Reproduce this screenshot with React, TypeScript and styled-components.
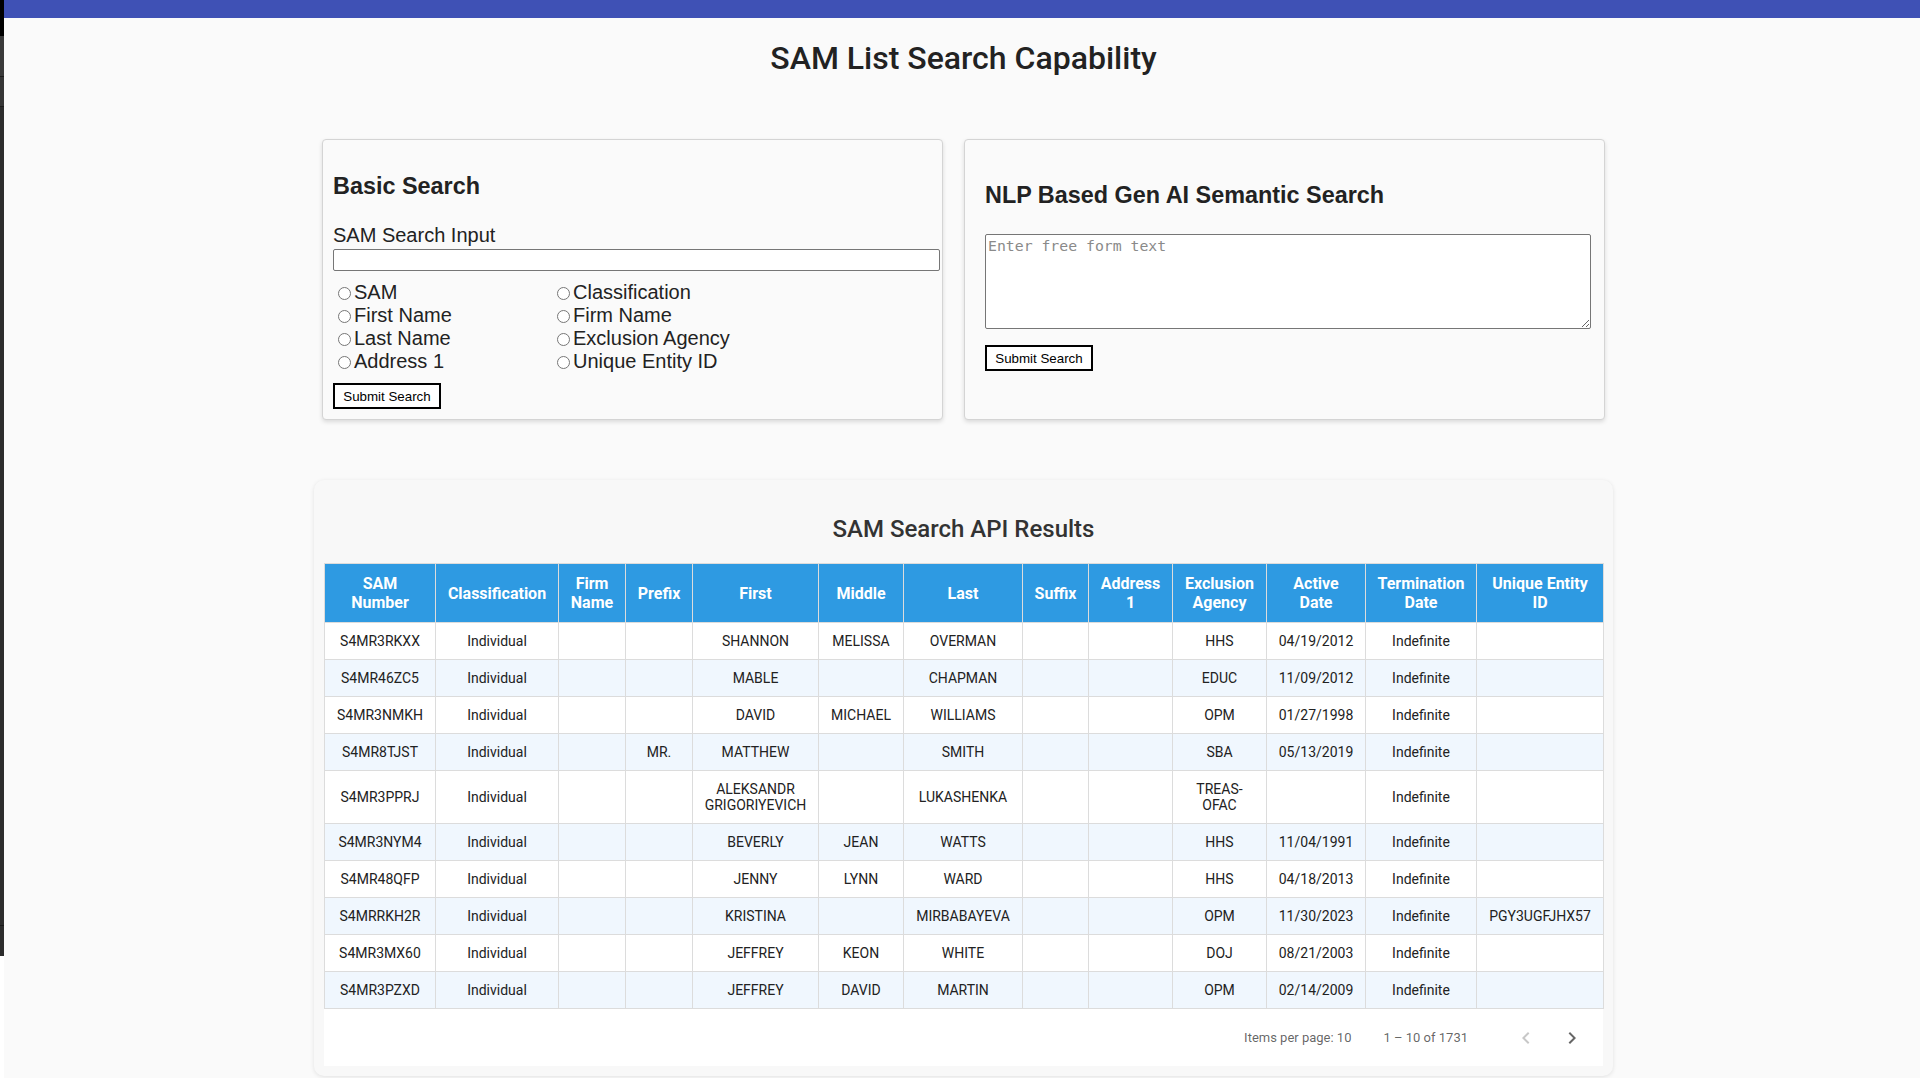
import React from 'react';
import styled, { createGlobalStyle } from 'styled-components';
import { MdChevronLeft, MdChevronRight } from 'react-icons/md';

const GlobalStyle = createGlobalStyle`
  html, body {
    margin: 0;
    padding: 0;
    background: #fff;
  }
  body {
    font-family: "Liberation Sans", Arial, sans-serif;
    color: #222;
  }
  * {
    box-sizing: border-box;
  }
`;

const Page = styled.div`
  display: flex;
  min-height: 1078px;
`;

const SideStrip = styled.div`
  width: 4px;
  height: 956px;
  flex-shrink: 0;
  background: linear-gradient(
    #000 0 36px,
    #3a3a3a 36px 76px,
    #1c1c1c 76px 77px,
    #363636 77px 106px,
    #1c1c1c 106px 107px,
    #2c2c2c 107px 925px,
    #1a1a1a 925px 926px,
    #2c2c2c 926px
  );
`;

const Main = styled.main`
  flex: 1;
  display: flex;
  flex-direction: column;
  align-items: center;
  padding-left: 3px;
  background: #fafafa;
`;

const TopBar = styled.div`
  align-self: stretch;
  margin-left: -3px;
  height: 18px;
  background: #3f51b5;
`;

const PageTitle = styled.h1`
  margin: 20px 0 0;
  font-family: Roboto, "Liberation Sans", sans-serif;
  font-size: 32px;
  line-height: 40px;
  font-weight: 500;
  color: #222;
`;

const CardRow = styled.section`
  display: flex;
  gap: 21px;
  margin-top: 61px;
`;

const SearchCard = styled.div<{ $width: number; $pad: string }>`
  width: ${(p) => p.$width}px;
  height: 281px;
  padding: ${(p) => p.$pad};
  background: #fafafa;
  border: 1px solid #d4d4d4;
  border-radius: 4px;
  box-shadow: 0 2px 4px rgba(0, 0, 0, 0.13);
`;

const CardHeading = styled.h2`
  margin: 0;
  font-size: 23.4px;
  line-height: 27px;
  font-weight: 700;
  color: #222;
`;

const FieldLabel = styled.label`
  display: block;
  margin-top: 24px;
  font-size: 20px;
  line-height: 23px;
  color: #222;
`;

const TextInput = styled.input`
  display: block;
  margin-top: 2px;
  width: 607px;
  height: 22px;
  padding: 1px 2px;
  border: 1px solid #767676;
  border-radius: 2px;
  background: #fff;
  font-size: 14px;
`;

const RadioGrid = styled.div`
  display: grid;
  grid-template-columns: 219px 1fr;
  grid-auto-flow: column;
  grid-template-rows: repeat(4, 23px);
  margin-top: 10px;
`;

const RadioOption = styled.label`
  display: flex;
  align-items: center;
  font-size: 20px;
  line-height: 23px;
  color: #222;

  input {
    margin: 2px 3px 0 5px;
    width: 13px;
    height: 13px;
  }
`;

const SubmitButton = styled.button<{ $top: number }>`
  display: block;
  margin-top: ${(p) => p.$top}px;
  width: 108px;
  height: 26px;
  padding: 0;
  background: #fff;
  border: 2px solid #000;
  font-family: "Liberation Sans", Arial, sans-serif;
  font-size: 13.33px;
  color: #000;
`;

const FreeText = styled.textarea`
  display: block;
  margin-top: 25px;
  width: 606px;
  height: 95px;
  padding: 2px 2px;
  border: 1px solid #767676;
  border-radius: 2px;
  background: #fff;
  font-family: "DejaVu Sans Mono", "Liberation Mono", monospace;
  font-size: 14.8px;
  line-height: 18px;
  resize: both;

  &::placeholder {
    color: #8a8a8a;
  }
`;

const ResultsCard = styled.section`
  margin-top: 60px;
  width: 1299px;
  padding: 35px 10px 10px;
  background: #f8f8f8;
  border-radius: 10px;
  box-shadow: 0 1px 4px rgba(0, 0, 0, 0.1);
  font-family: Roboto, "Liberation Sans", sans-serif;
`;

const ResultsTitle = styled.h2`
  margin: 0;
  text-align: center;
  font-size: 24px;
  line-height: 28px;
  font-weight: 500;
  color: #333;
`;

const Table = styled.table`
  margin-top: 20px;
  width: 1279px;
  table-layout: fixed;
  border-collapse: collapse;
  background: #fff;
`;

const HeadCell = styled.th`
  padding: 10px 8px;
  background: #2e9ae2;
  color: #fff;
  font-size: 16px;
  line-height: 19px;
  font-weight: 700;
  text-align: center;
  vertical-align: middle;
  border: 1px solid #dcdcdc;
`;

const Row = styled.tr<{ $alt: boolean }>`
  background: ${(p) => (p.$alt ? '#f0f7fe' : '#fff')};
`;

const Cell = styled.td`
  padding: 10px 8px;
  font-size: 14px;
  line-height: 16px;
  color: #222;
  text-align: center;
  vertical-align: middle;
  border: 1px solid #dcdcdc;
`;

const Paginator = styled.div`
  display: flex;
  align-items: center;
  justify-content: flex-end;
  height: 57px;
  padding-right: 11px;
  background: #fff;
  font-size: 13px;
  color: rgba(0, 0, 0, 0.62);
`;

const RangeLabel = styled.span`
  margin-left: 32px;
`;

const NavButtons = styled.div`
  display: flex;
  gap: 6px;
  margin-left: 38px;
`;

const NavButton = styled.button<{ $disabled?: boolean }>`
  display: flex;
  align-items: center;
  justify-content: center;
  width: 40px;
  height: 40px;
  padding: 0;
  border: none;
  border-radius: 50%;
  background: transparent;
  color: ${(p) => (p.$disabled ? 'rgba(0,0,0,0.22)' : 'rgba(0,0,0,0.6)')};
`;

const columns: { label: string; width: number }[] = [
  { label: 'SAM Number', width: 111 },
  { label: 'Classification', width: 123 },
  { label: 'Firm Name', width: 67 },
  { label: 'Prefix', width: 67 },
  { label: 'First', width: 126 },
  { label: 'Middle', width: 85 },
  { label: 'Last', width: 119 },
  { label: 'Suffix', width: 66 },
  { label: 'Address 1', width: 84 },
  { label: 'Exclusion Agency', width: 94 },
  { label: 'Active Date', width: 99 },
  { label: 'Termination Date', width: 111 },
  { label: 'Unique Entity ID', width: 127 },
];

const rows: string[][] = [
  ['S4MR3RKXX', 'Individual', '', '', 'SHANNON', 'MELISSA', 'OVERMAN', '', '', 'HHS', '04/19/2012', 'Indefinite', ''],
  ['S4MR46ZC5', 'Individual', '', '', 'MABLE', '', 'CHAPMAN', '', '', 'EDUC', '11/09/2012', 'Indefinite', ''],
  ['S4MR3NMKH', 'Individual', '', '', 'DAVID', 'MICHAEL', 'WILLIAMS', '', '', 'OPM', '01/27/1998', 'Indefinite', ''],
  ['S4MR8TJST', 'Individual', '', 'MR.', 'MATTHEW', '', 'SMITH', '', '', 'SBA', '05/13/2019', 'Indefinite', ''],
  ['S4MR3PPRJ', 'Individual', '', '', 'ALEKSANDR GRIGORIYEVICH', '', 'LUKASHENKA', '', '', 'TREAS-OFAC', '', 'Indefinite', ''],
  ['S4MR3NYM4', 'Individual', '', '', 'BEVERLY', 'JEAN', 'WATTS', '', '', 'HHS', '11/04/1991', 'Indefinite', ''],
  ['S4MR48QFP', 'Individual', '', '', 'JENNY', 'LYNN', 'WARD', '', '', 'HHS', '04/18/2013', 'Indefinite', ''],
  ['S4MRRKH2R', 'Individual', '', '', 'KRISTINA', '', 'MIRBABAYEVA', '', '', 'OPM', '11/30/2023', 'Indefinite', 'PGY3UGFJHX57'],
  ['S4MR3MX60', 'Individual', '', '', 'JEFFREY', 'KEON', 'WHITE', '', '', 'DOJ', '08/21/2003', 'Indefinite', ''],
  ['S4MR3PZXD', 'Individual', '', '', 'JEFFREY', 'DAVID', 'MARTIN', '', '', 'OPM', '02/14/2009', 'Indefinite', ''],
];

const searchFields = [
  'SAM',
  'First Name',
  'Last Name',
  'Address 1',
  'Classification',
  'Firm Name',
  'Exclusion Agency',
  'Unique Entity ID',
];

export default function App() {
  return (
    <>
      <GlobalStyle />
      <Page>
        <SideStrip />
        <Main>
          <TopBar />
          <PageTitle>SAM List Search Capability</PageTitle>

          <CardRow>
            <SearchCard $width={621} $pad="33px 10px 10px">
              <CardHeading>Basic Search</CardHeading>
              <FieldLabel htmlFor="sam-input">SAM Search Input</FieldLabel>
              <TextInput id="sam-input" type="text" />
              <RadioGrid>
                {searchFields.map((f) => (
                  <RadioOption key={f}>
                    <input type="radio" name="field" value={f} />
                    {f}
                  </RadioOption>
                ))}
              </RadioGrid>
              <SubmitButton $top={10}>Submit Search</SubmitButton>
            </SearchCard>

            <SearchCard $width={641} $pad="42px 14px 0 20px">
              <CardHeading>NLP Based Gen AI Semantic Search</CardHeading>
              <FreeText placeholder="Enter free form text" />
              <SubmitButton $top={16}>Submit Search</SubmitButton>
            </SearchCard>
          </CardRow>

          <ResultsCard>
            <ResultsTitle>SAM Search API Results</ResultsTitle>
            <Table>
              <colgroup>
                {columns.map((c) => (
                  <col key={c.label} style={{ width: c.width }} />
                ))}
              </colgroup>
              <thead>
                <tr>
                  {columns.map((c) => (
                    <HeadCell key={c.label}>{c.label}</HeadCell>
                  ))}
                </tr>
              </thead>
              <tbody>
                {rows.map((r, i) => (
                  <Row key={r[0]} $alt={i % 2 === 1}>
                    {r.map((v, j) => (
                      <Cell key={j}>{v}</Cell>
                    ))}
                  </Row>
                ))}
              </tbody>
            </Table>
            <Paginator>
              <span>Items per page: 10</span>
              <RangeLabel>1 – 10 of 1731</RangeLabel>
              <NavButtons>
                <NavButton $disabled aria-label="Previous page">
                  <MdChevronLeft size={24} />
                </NavButton>
                <NavButton aria-label="Next page">
                  <MdChevronRight size={24} />
                </NavButton>
              </NavButtons>
            </Paginator>
          </ResultsCard>
        </Main>
      </Page>
    </>
  );
}
